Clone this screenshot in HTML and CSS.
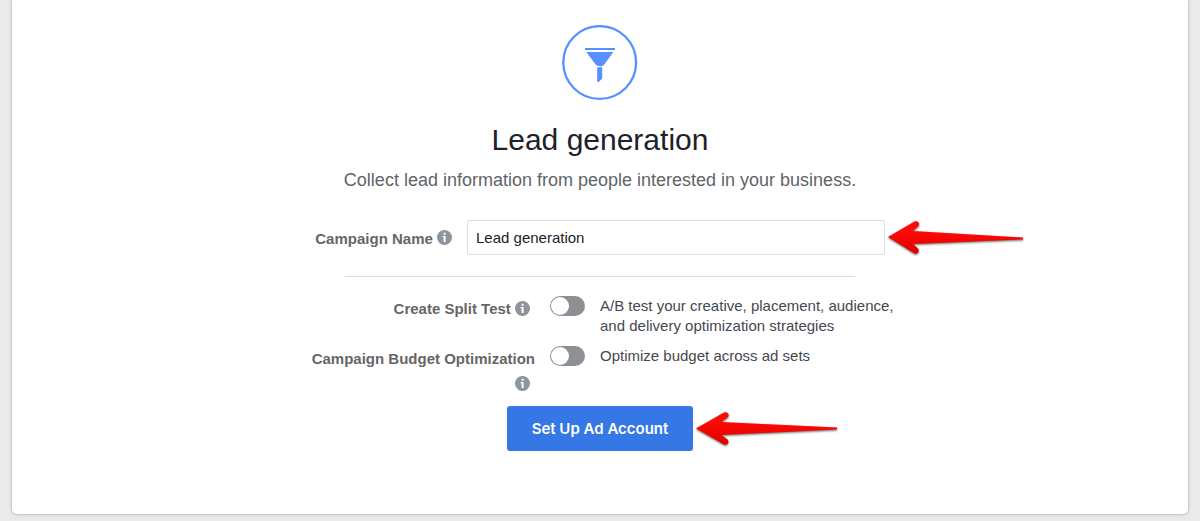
FILE: index.html
```html
<!DOCTYPE html>
<html lang="en">
<head>
  <meta charset="UTF-8">
  <meta name="viewport" content="width=device-width, initial-scale=1.0">
  <title>Lead generation</title>
  <link rel="stylesheet" href="styles.css">
</head>
<body>
  <svg class="defs" width="0" height="0" aria-hidden="true">
    <defs>
      <linearGradient id="red" x1="0" y1="0" x2="0" y2="1">
        <stop offset="0.3" stop-color="#ff0a05"/>
        <stop offset="1" stop-color="#dc0000"/>
      </linearGradient>
      <symbol id="info" viewBox="0 0 15 15">
        <circle cx="7.5" cy="7.5" r="7.5" fill="#8d949e"/>
        <path d="M6.600 2.800h2v2h-2zM5.500 6h3.100v6h-2V7.200H5.500z" fill="#fff"/>
      </symbol>
      <symbol id="arrow" viewBox="0 0 144 40">
        <path d="M3 17 29.500 1.500C32.500 0 36 3.500 33 6.500L28 11 138 17.500V19.500L28 24 33 28.500C35 31 32.500 35 29.500 33.500Z" fill="url(#red)"/>
      </symbol>
      <symbol id="arrow-long" viewBox="0 0 144 46">
        <path d="M3 22.500 31 6.500C34 5 37.500 8.500 34.500 11.500L28.500 16 144 21.500V23.500L28.500 29 34.500 33.500C37 36.500 34 40 31 38.500Z" fill="url(#red)"/>
      </symbol>
    </defs>
  </svg>

  <main class="card">
    <svg class="objective-icon" viewBox="0 0 76 76" aria-hidden="true">
      <circle cx="37.700" cy="37.500" r="36.400" fill="none" stroke="#5890ff" stroke-width="2.300"/>
      <path d="M23 23h30v2H23zM24.300 27h27.100L42.300 39.500C41.300 40.900 39.800 41.200 38 41.200s-3.400-.4-4.400-1.700zM35.200 42.300h5V53.500l-3.500 3.500h-1.500z" fill="#5890ff"/>
    </svg>
    <h1>Lead generation</h1>
    <p class="subtitle">Collect lead information from people interested in your business.</p>

    <form class="form">
      <div class="name-row">
        <div class="label"><label for="campaign-name">Campaign Name</label> <svg class="info"><use href="#info"/></svg></div>
        <div class="pointed">
          <input class="text-input" id="campaign-name" type="text" value="Lead generation">
          <svg class="arrow"><use href="#arrow"/></svg>
        </div>
      </div>

      <hr>

      <div class="option-row">
        <div class="label"><label for="split-test">Create Split Test</label> <svg class="info"><use href="#info"/></svg></div>
        <input class="switch" id="split-test" type="checkbox">
        <p>A/B test your creative, placement, audience, and delivery optimization strategies</p>
      </div>
      <div class="option-row">
        <div class="label"><label for="budget">Campaign Budget Optimization</label> <svg class="info"><use href="#info"/></svg></div>
        <input class="switch" id="budget" type="checkbox">
        <p>Optimize budget across ad sets</p>
      </div>

      <div class="pointed submit">
        <button type="button">Set Up Ad Account</button>
        <svg class="arrow arrow-long"><use href="#arrow-long"/></svg>
      </div>
    </form>
  </main>
</body>
</html>
```
FILE: styles.css
```css
* {
  box-sizing: border-box;
}

body {
  margin: 0;
  padding: 0 12px 7px;
  background: #e9eaec;
  font-family: "Liberation Sans", Arial, sans-serif;
  font-size: 15px;
  color: #444950;
}

.defs {
  position: absolute;
}

.card {
  display: flex;
  flex-direction: column;
  align-items: center;
  padding: 25px 16px 63px;
  background: #fff;
  border-radius: 0 0 5px 5px;
  box-shadow: 0 0 3px #999;
}

.objective-icon {
  width: 76px;
  height: 76px;
}

h1 {
  margin: 21px 0 0;
  font-size: 30px;
  font-weight: normal;
  line-height: 36px;
  color: #1d2129;
}

.subtitle {
  margin: 10px 0 28px;
  font-size: 18px;
  line-height: 24px;
  text-align: center;
  color: #606468;
}

.form {
  width: 100%;
  max-width: 600px;
}

.name-row {
  display: grid;
  grid-template-columns: 152px 1fr;
  gap: 15px;
  align-items: center;
  padding-right: 15px;
}

.label {
  font-weight: bold;
  line-height: 25px;
  text-align: right;
  color: #666;
}

.name-row .label {
  padding-top: 2px;
}

.info {
  width: 15px;
  height: 15px;
  vertical-align: -1px;
}

/* wraps a control that has an arrow on its right */
.pointed {
  position: relative;
}

.arrow {
  position: absolute;
  left: 100%;
  top: 0;
  width: 144px;
  height: 40px;
  filter: drop-shadow(0 1px 1px rgba(0, 0, 0, 0.6));
}

.arrow-long {
  height: 46px;
}

.text-input {
  display: block;
  width: 100%;
  height: 35px;
  padding: 0 8px;
  border: 1px solid #dddfe2;
  border-radius: 2px;
  font: inherit;
  color: #1d2129;
}

hr {
  margin: 21px 45px 19px;
  border: 0;
  border-top: 1px solid #dadde1;
}

.option-row {
  display: grid;
  grid-template-columns: 235px 35px 1fr;
  gap: 15px;
  margin-bottom: 10px;
}

.option-row .info {
  margin-right: 5px;
  vertical-align: -2px;
}

.option-row p {
  margin: 0;
  line-height: 20px;
}

.switch {
  appearance: none;
  width: 35px;
  height: 20px;
  margin: 0;
  border-radius: 10px;
  background: #8d9195;
}

.switch::before {
  content: "";
  display: block;
  width: 18px;
  height: 18px;
  margin: 1px;
  border-radius: 50%;
  background: #fff;
}

.submit {
  width: fit-content;
  margin: 0 auto;
}

.submit button {
  height: 45px;
  padding: 0 25px;
  border: 0;
  border-radius: 3px;
  background: #3578e5;
  font-family: Inter, "Liberation Sans", sans-serif;
  font-size: 15px;
  font-weight: 600;
  color: #fff;
}
```
